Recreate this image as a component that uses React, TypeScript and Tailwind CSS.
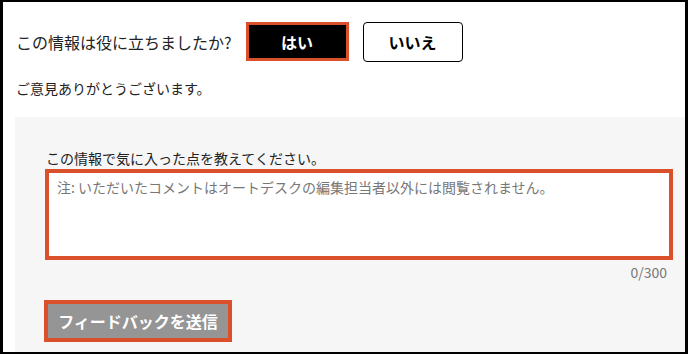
export default function App() {
  const font = { fontFamily: '"Noto Sans CJK JP", "Noto Sans", sans-serif' }
  return (
    <div
      className="flex h-[354px] w-[688px] flex-col border-x-[3px] border-y-2 border-black bg-white text-[#222]"
      style={font}
    >
      <div className="pl-[13px] pt-[20px]">
        <div className="flex items-start">
          <span className="mt-[9px] text-[16px] leading-[22px]">この情報は役に立ちましたか?</span>
          <button className="ml-[14px] h-[39px] w-[103px] border-[3px] border-[#d9502a] bg-black text-[16px] font-bold text-white">
            はい
          </button>
          <button className="ml-[14px] h-[40px] w-[100px] rounded-[4px] border border-black bg-white text-[16px] font-bold text-black">
            いいえ
          </button>
        </div>
        <p className="mt-[17px] text-[14px] leading-[18px]">ご意見ありがとうございます。</p>
      </div>

      <div className="ml-[12px] mt-[20px] flex flex-1 flex-col bg-[#f6f6f6] pl-[30px] pr-[12px] pt-[32px]">
        <label className="pl-[1px] text-[14px] leading-[18px]">この情報で気に入った点を教えてください。</label>
        <textarea
          className="mt-[2px] block h-[91px] w-full resize-none border-4 border-[#d9502a] bg-white px-[8px] pt-[4px] text-[14px] leading-[20px] outline-none placeholder:text-[#777]"
          placeholder="注: いただいたコメントはオートデスクの編集担当者以外には閲覧されません。"
        />
        <div className="mt-[2px] pr-[6px] text-right text-[14px] leading-[20px] text-[#777]">0/300</div>
        <div className="mt-[18px]">
          <button className="-ml-px h-[42px] w-[188px] border-4 border-[#d9502a] bg-[#959595] text-[16px] font-bold text-white">
            フィードバックを送信
          </button>
        </div>
      </div>
    </div>
  )
}
